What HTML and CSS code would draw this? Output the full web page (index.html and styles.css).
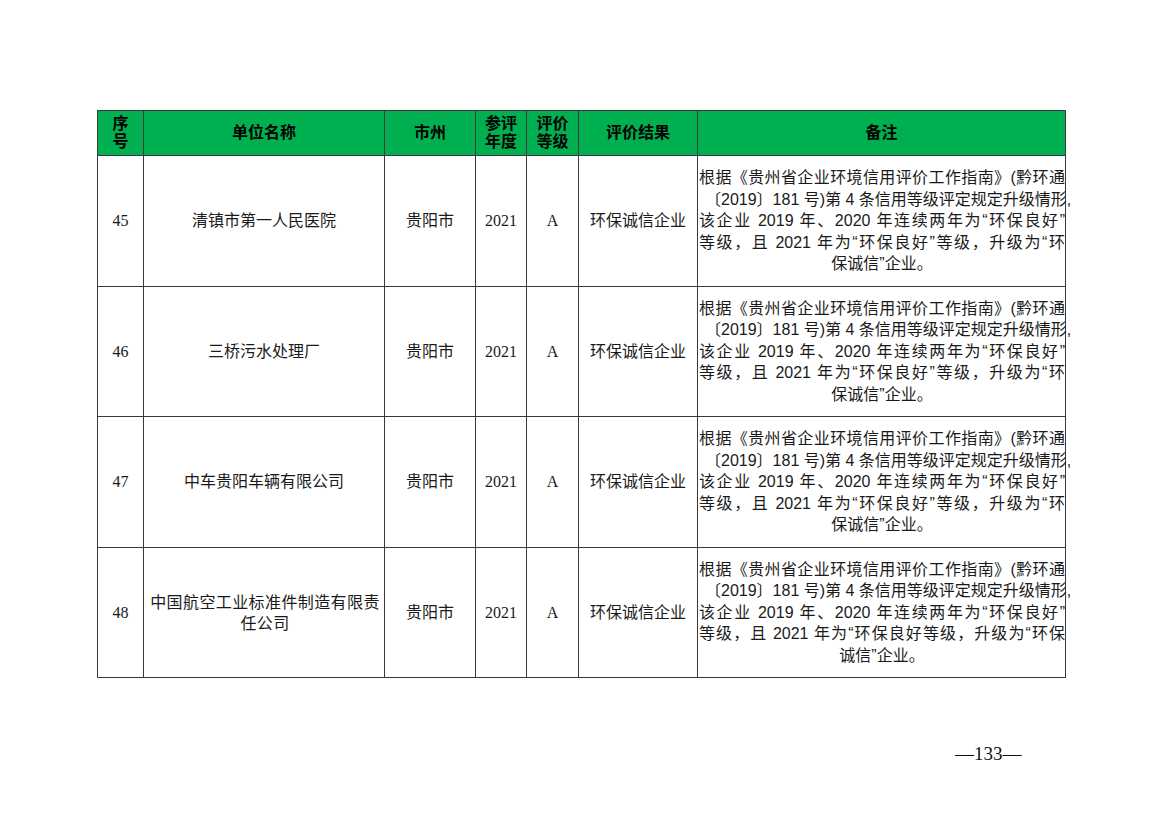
FILE: index.html
```html
<!DOCTYPE html>
<html lang="zh-CN">
<head>
<meta charset="utf-8">
<title>环保诚信企业名单</title>
<link rel="stylesheet" href="styles.css">
</head>
<body>
<div class="page">
  <table class="grid">
    <colgroup>
      <col class="c-no"><col class="c-name"><col class="c-city"><col class="c-year"><col class="c-grade"><col class="c-result"><col class="c-note">
    </colgroup>
    <thead>
      <tr>
        <th class="narrow">序号</th>
        <th>单位名称</th>
        <th>市州</th>
        <th class="narrow">参评年度</th>
        <th class="narrow">评价等级</th>
        <th>评价结果</th>
        <th>备注</th>
      </tr>
    </thead>
    <tbody>
      <tr>
        <td>45</td>
        <td>清镇市第一人民医院</td>
        <td>贵阳市</td>
        <td>2021</td>
        <td>A</td>
        <td>环保诚信企业</td>
        <td class="note">
          <span class="ln">根据《贵州省企业环境信用评价工作指南》(黔环通</span>
          <span class="ln ind">〔2019〕181 号)第 4 条信用等级评定规定升级情形,</span>
          <span class="ln">该企业 2019 年、2020 年连续两年为“环保良好”</span>
          <span class="ln">等级，且 2021 年为“环保良好”等级，升级为“环</span>
          <span class="last">保诚信”企业。</span>
        </td>
      </tr>
      <tr>
        <td>46</td>
        <td>三桥污水处理厂</td>
        <td>贵阳市</td>
        <td>2021</td>
        <td>A</td>
        <td>环保诚信企业</td>
        <td class="note">
          <span class="ln">根据《贵州省企业环境信用评价工作指南》(黔环通</span>
          <span class="ln ind">〔2019〕181 号)第 4 条信用等级评定规定升级情形,</span>
          <span class="ln">该企业 2019 年、2020 年连续两年为“环保良好”</span>
          <span class="ln">等级，且 2021 年为“环保良好”等级，升级为“环</span>
          <span class="last">保诚信”企业。</span>
        </td>
      </tr>
      <tr>
        <td>47</td>
        <td>中车贵阳车辆有限公司</td>
        <td>贵阳市</td>
        <td>2021</td>
        <td>A</td>
        <td>环保诚信企业</td>
        <td class="note">
          <span class="ln">根据《贵州省企业环境信用评价工作指南》(黔环通</span>
          <span class="ln ind">〔2019〕181 号)第 4 条信用等级评定规定升级情形,</span>
          <span class="ln">该企业 2019 年、2020 年连续两年为“环保良好”</span>
          <span class="ln">等级，且 2021 年为“环保良好”等级，升级为“环</span>
          <span class="last">保诚信”企业。</span>
        </td>
      </tr>
      <tr>
        <td>48</td>
        <td class="wrap">中国航空工业标准件制造有限责任公司</td>
        <td>贵阳市</td>
        <td>2021</td>
        <td>A</td>
        <td>环保诚信企业</td>
        <td class="note">
          <span class="ln">根据《贵州省企业环境信用评价工作指南》(黔环通</span>
          <span class="ln ind">〔2019〕181 号)第 4 条信用等级评定规定升级情形,</span>
          <span class="ln">该企业 2019 年、2020 年连续两年为“环保良好”</span>
          <span class="ln">等级，且 2021 年为“环保良好等级，升级为“环保</span>
          <span class="last">诚信”企业。</span>
        </td>
      </tr>
    </tbody>
  </table>
  <div class="pagenum">—133—</div>
</div>
</body>
</html>
```
FILE: styles.css
```css
html, body {
  margin: 0;
  padding: 0;
  background: #ffffff;
}

.page {
  padding: 110px 0 0 97px;
  width: 968px;
  font-family: "Liberation Serif", "Noto Sans CJK SC", serif;
  color: #111;
}

.grid {
  border-collapse: collapse;
  table-layout: fixed;
  width: 968px;
}

.c-no { width: 46px; }
.c-name { width: 241px; }
.c-city { width: 91px; }
.c-year { width: 51px; }
.c-grade { width: 52px; }
.c-result { width: 119px; }
.c-note { width: 368px; }

.grid th,
.grid td {
  border: 1px solid #3a3a3a;
  text-align: center;
  vertical-align: middle;
  padding: 0;
}

.grid th {
  background: #00b050;
  height: 44px;
  font-family: "Liberation Sans", "Noto Sans CJK SC", sans-serif;
  font-weight: bold;
  font-size: 16px;
  line-height: 18px;
  color: #000;
}

.grid th.narrow {
  padding: 0 7px;
}

.grid td {
  height: 129.6px;
  font-size: 16px;
  line-height: 21px;
  color: #1a1a1a;
}

.grid td.wrap {
  padding: 0 3px 0 5px;
  letter-spacing: 0.4px;
}

.grid td.note {
  padding: 0 0 0 1px;
  font-family: "Liberation Sans", "Noto Sans CJK SC", sans-serif;
  font-size: 16px;
  line-height: 21.5px;
}

.ln {
  display: block;
  text-align: justify;
  text-align-last: justify;
  white-space: nowrap;
}

.ln.ind {
  padding-left: 6px;
}

.last {
  display: block;
  text-align: center;
}

.pagenum {
  margin: 65px 0 0 858px;
  font-size: 19px;
  color: #111;
  white-space: nowrap;
}
```
